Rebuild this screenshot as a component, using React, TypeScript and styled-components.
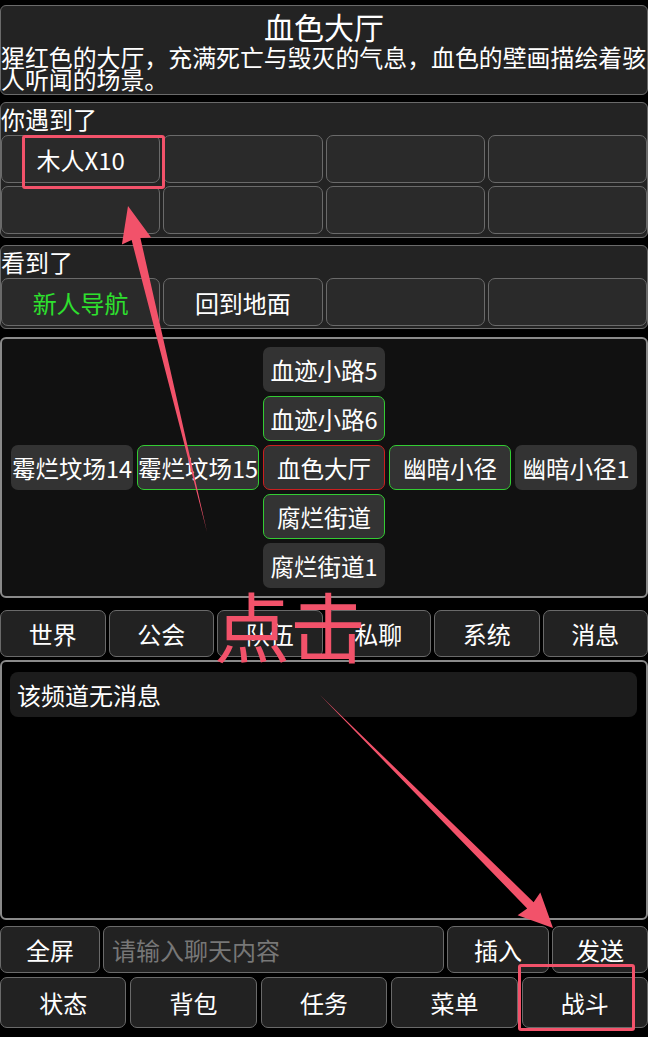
import React from 'react';
import styled, { createGlobalStyle, css } from 'styled-components';

const GlobalStyle = createGlobalStyle`
  html, body {
    margin: 0;
    padding: 0;
    background: #000;
  }
  body {
    font-family: "Noto Sans CJK SC", "Microsoft YaHei", sans-serif;
    color: #fff;
  }
  * { box-sizing: border-box; }
`;

const ANNOT = '#f2526a';

const Page = styled.div`
  position: relative;
  width: 648px;
  height: 1037px;
  padding-top: 5px;
  overflow: hidden;
  display: flex;
  flex-direction: column;
`;

const Panel = styled.section<{ $mt?: number }>`
  margin-top: ${(p) => p.$mt ?? 0}px;
  border: 1px solid #6a6a6a;
  border-radius: 6px;
  background: #232323;
`;

const RoomTitle = styled.h1`
  margin: 0;
  font-size: 30px;
  font-weight: 400;
  line-height: 40px;
  text-align: center;
`;

const RoomDesc = styled.p`
  margin: 0;
  padding-bottom: 4px;
  font-size: 23.9px;
  line-height: 22px;
`;

const Label = styled.div`
  font-size: 24px;
  line-height: 32px;
`;

const SlotGrid = styled.div<{ $pb: number }>`
  display: grid;
  grid-template-columns: repeat(4, 1fr);
  grid-auto-rows: 48px;
  gap: 3px;
  padding-bottom: ${(p) => p.$pb}px;
`;

const Slot = styled.button<{ $green?: boolean }>`
  font: inherit;
  font-size: 24px;
  color: ${(p) => (p.$green ? '#2ee02e' : '#fff')};
  background: #2a2a2a;
  border: 1px solid #6a6a6a;
  border-radius: 7px;
  padding: 0;
`;

const MapPanel = styled.section`
  margin-top: 8px;
  height: 261px;
  border: 2px solid #8a8a8a;
  border-radius: 6px;
  background: #111;
  padding-top: 8px;
  display: grid;
  grid-template-columns: repeat(5, 122px);
  grid-template-rows: repeat(5, 45px);
  gap: 4px;
  justify-content: center;
  align-content: start;
`;

const MapCell = styled.div<{ $col: number; $row: number; $edge?: 'green' | 'red' }>`
  grid-column: ${(p) => p.$col};
  grid-row: ${(p) => p.$row};
  display: flex;
  align-items: center;
  justify-content: center;
  white-space: nowrap;
  font-size: 23.5px;
  background: #333;
  border-radius: 7px;
  border: 1px solid
    ${(p) => (p.$edge === 'green' ? '#33cc33' : p.$edge === 'red' ? '#cc1f1f' : 'transparent')};
`;

const ButtonRow = styled.div<{ $mt: number; $h: number; $cols: string; $gap: number }>`
  margin-top: ${(p) => p.$mt}px;
  height: ${(p) => p.$h}px;
  display: grid;
  grid-template-columns: ${(p) => p.$cols};
  gap: ${(p) => p.$gap}px;
`;

const DarkButton = styled.button`
  font: inherit;
  font-size: 24px;
  color: #fff;
  background: #222;
  border: 1px solid #6a6a6a;
  border-radius: 7px;
  padding: 0;
`;

const ChatInput = styled.input`
  font: inherit;
  font-size: 24px;
  color: #fff;
  background: #222;
  border: 1px solid #6a6a6a;
  border-radius: 7px;
  padding: 0 8px;
  outline: none;
  &::placeholder {
    color: #777;
  }
`;

const ChatPanel = styled.section`
  margin-top: 3px;
  height: 260px;
  border: 2px solid #8a8a8a;
  border-radius: 6px;
  background: #000;
  padding: 10px 9px 0 8px;
`;

const ChatLine = styled.div`
  height: 45px;
  border-radius: 8px;
  background: #1c1c1c;
  padding-left: 7px;
  font-size: 24px;
  line-height: 45px;
`;

/* annotation layer drawn over the screenshot */
const Mark = styled.div<{ $x: number; $y: number; $w: number; $h: number }>`
  position: absolute;
  left: ${(p) => p.$x}px;
  top: ${(p) => p.$y}px;
  width: ${(p) => p.$w}px;
  height: ${(p) => p.$h}px;
  border: 3px solid ${ANNOT};
  border-radius: 3px;
  pointer-events: none;
`;

const ClickHint = styled.div`
  position: absolute;
  left: 214px;
  top: 586px;
  font-size: 76px;
  line-height: 76px;
  color: ${ANNOT};
  pointer-events: none;
`;

const ArrowLayer = styled.svg`
  position: absolute;
  left: 0;
  top: 0;
  pointer-events: none;
`;

type Pt = [number, number];

const arrowPoints = (tail: Pt, tip: Pt, headLen: number, headHalf: number, shaftHalf: number) => {
  const dx = tip[0] - tail[0];
  const dy = tip[1] - tail[1];
  const len = Math.hypot(dx, dy);
  const ux = dx / len;
  const uy = dy / len;
  const nx = -uy;
  const ny = ux;
  const bx = tip[0] - ux * headLen;
  const by = tip[1] - uy * headLen;
  const pts: Pt[] = [
    tail,
    [bx + nx * shaftHalf, by + ny * shaftHalf],
    [bx + nx * headHalf - ux * 2, by + ny * headHalf - uy * 2],
    tip,
    [bx - nx * headHalf - ux * 2, by - ny * headHalf - uy * 2],
    [bx - nx * shaftHalf, by - ny * shaftHalf],
  ];
  return pts.map((p) => p.map((v) => v.toFixed(1)).join(',')).join(' ');
};

const mapCells: { name: string; col: number; row: number; edge?: 'green' | 'red' }[] = [
  { name: '血迹小路5', col: 3, row: 1 },
  { name: '血迹小路6', col: 3, row: 2, edge: 'green' },
  { name: '霉烂坟场14', col: 1, row: 3 },
  { name: '霉烂坟场15', col: 2, row: 3, edge: 'green' },
  { name: '血色大厅', col: 3, row: 3, edge: 'red' },
  { name: '幽暗小径', col: 4, row: 3, edge: 'green' },
  { name: '幽暗小径1', col: 5, row: 3 },
  { name: '腐烂街道', col: 3, row: 4, edge: 'green' },
  { name: '腐烂街道1', col: 3, row: 5 },
];

const tabs = ['世界', '公会', '队伍', '私聊', '系统', '消息'];
const menu = ['状态', '背包', '任务', '菜单', '战斗'];

const App = () => {
  return (
    <>
      <GlobalStyle />
      <Page>
        <Panel>
          <RoomTitle>血色大厅</RoomTitle>
          <RoomDesc>猩红色的大厅，充满死亡与毁灭的气息，血色的壁画描绘着骇人听闻的场景。</RoomDesc>
        </Panel>

        <Panel $mt={7}>
          <Label>你遇到了</Label>
          <SlotGrid $pb={3}>
            <Slot>木人X10</Slot>
            <Slot />
            <Slot />
            <Slot />
            <Slot />
            <Slot />
            <Slot />
            <Slot />
          </SlotGrid>
        </Panel>

        <Panel $mt={7}>
          <Label>看到了</Label>
          <SlotGrid $pb={2}>
            <Slot $green>新人导航</Slot>
            <Slot>回到地面</Slot>
            <Slot />
            <Slot />
          </SlotGrid>
        </Panel>

        <MapPanel>
          {mapCells.map((c) => (
            <MapCell key={c.name} $col={c.col} $row={c.row} $edge={c.edge}>
              {c.name}
            </MapCell>
          ))}
        </MapPanel>

        <ButtonRow $mt={12} $h={47} $cols="repeat(6, 1fr)" $gap={3}>
          {tabs.map((t) => (
            <DarkButton key={t}>{t}</DarkButton>
          ))}
        </ButtonRow>

        <ChatPanel>
          <ChatLine>该频道无消息</ChatLine>
        </ChatPanel>

        <ButtonRow $mt={6} $h={47} $cols="100px 1fr 102px 96px" $gap={3}>
          <DarkButton>全屏</DarkButton>
          <ChatInput placeholder="请输入聊天内容" />
          <DarkButton>插入</DarkButton>
          <DarkButton>发送</DarkButton>
        </ButtonRow>

        <ButtonRow $mt={4} $h={51} $cols="repeat(5, 1fr)" $gap={4}>
          {menu.map((m) => (
            <DarkButton key={m}>{m}</DarkButton>
          ))}
        </ButtonRow>

        <Mark $x={22} $y={135} $w={143} $h={54} />
        <Mark $x={518} $y={964} $w={117} $h={67} />
        <ClickHint>点击</ClickHint>
        <ArrowLayer width={648} height={1037} viewBox="0 0 648 1037">
          <polygon points={arrowPoints([207, 532], [128, 206], 34, 15, 4.5)} fill={ANNOT} />
          <polygon points={arrowPoints([320, 695], [553, 928], 32, 16, 4.5)} fill={ANNOT} />
        </ArrowLayer>
      </Page>
    </>
  );
};

export default App;
